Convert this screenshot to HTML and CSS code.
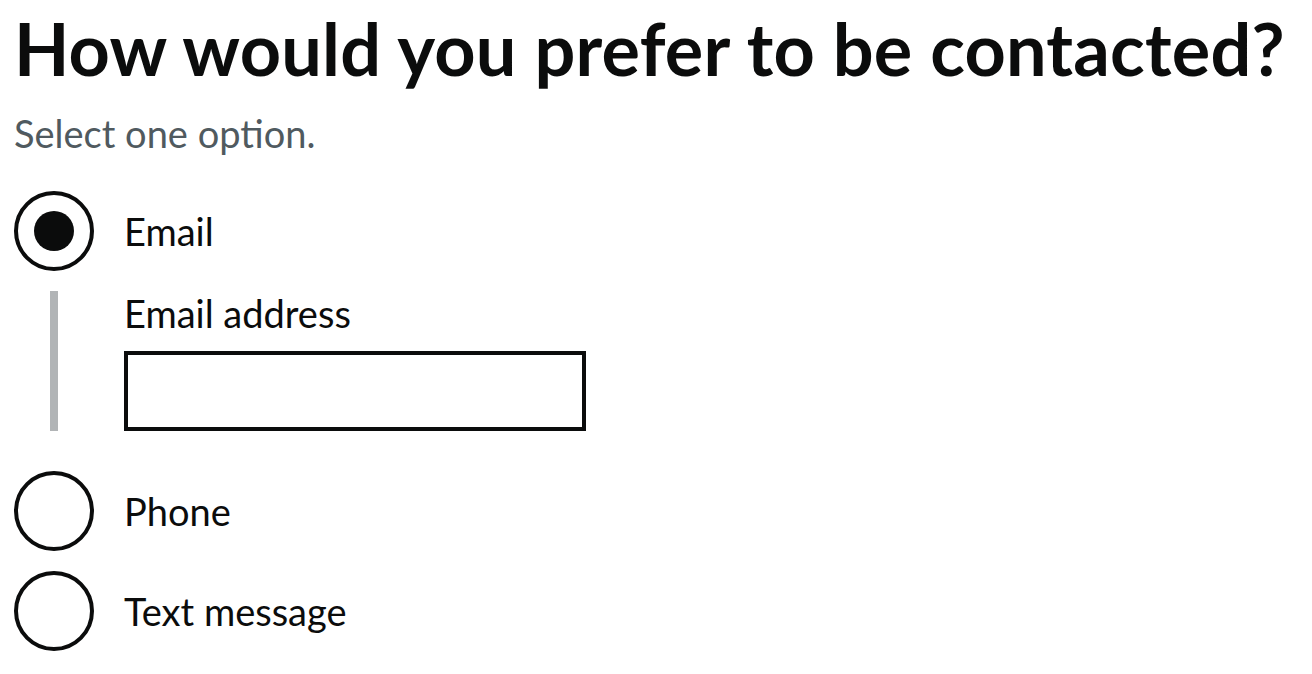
FILE: index.html
```html
<!DOCTYPE html>
<html lang="en">
<head>
<meta charset="utf-8">
<title>Contact preference</title>
<link rel="stylesheet" href="styles.css">
</head>
<body>
<form class="form">
  <fieldset class="fieldset">
    <legend class="legend">How would you prefer to be contacted?</legend>
    <div class="hint">Select one option.</div>
    <div class="radios">
      <label class="item">
        <span class="circle checked"></span>
        <span class="label">Email</span>
      </label>
      <div class="conditional">
        <label class="field-label" for="email">Email address</label>
        <input class="input" id="email" type="email">
      </div>
      <label class="item">
        <span class="circle"></span>
        <span class="label">Phone</span>
      </label>
      <label class="item">
        <span class="circle"></span>
        <span class="label">Text message</span>
      </label>
    </div>
  </fieldset>
</form>
</body>
</html>
```
FILE: styles.css
```css
html, body {
  margin: 0;
  padding: 0;
  background: #ffffff;
}
body {
  font-family: "Lato", "Liberation Sans", sans-serif;
  color: #0b0c0c;
}
.form {
  padding: 1px 14px 0;
}
.fieldset {
  margin: 0;
  padding: 0;
  border: 0;
  min-width: 0;
}
.legend {
  padding: 7px 0 0;
  margin: 0 0 20px;
  font-size: 72px;
  line-height: 80px;
  font-weight: 700;
  letter-spacing: 0.22px;
  white-space: nowrap;
}
.hint {
  font-size: 38px;
  line-height: 50px;
  color: #505a5f;
  margin-bottom: 33px;
}
.radios {
  display: flex;
  flex-direction: column;
}
.item {
  display: flex;
  align-items: center;
  min-height: 80px;
  margin-bottom: 20px;
}
.item:last-child {
  margin-bottom: 0;
}
.circle {
  box-sizing: border-box;
  width: 80px;
  height: 80px;
  flex: none;
  border: 4px solid #0b0c0c;
  border-radius: 50%;
  display: flex;
  align-items: center;
  justify-content: center;
}
.circle.checked::before {
  content: "";
  width: 40px;
  height: 40px;
  border-radius: 50%;
  background: #0b0c0c;
}
.label {
  font-size: 38px;
  line-height: 50px;
  padding: 10px 30px;
}
.conditional {
  margin: 0 0 40px 36px;
  padding-left: 66px;
  border-left: 8px solid #b1b4b6;
  display: flex;
  flex-direction: column;
  align-items: flex-start;
}
.field-label {
  font-size: 38px;
  line-height: 50px;
  margin-top: -3px;
  margin-bottom: 13px;
}
.input {
  box-sizing: border-box;
  width: 462px;
  height: 80px;
  margin: 0;
  padding: 10px;
  border: 4px solid #0b0c0c;
  border-radius: 0;
  font: inherit;
  font-size: 38px;
  background: #fff;
}
```
